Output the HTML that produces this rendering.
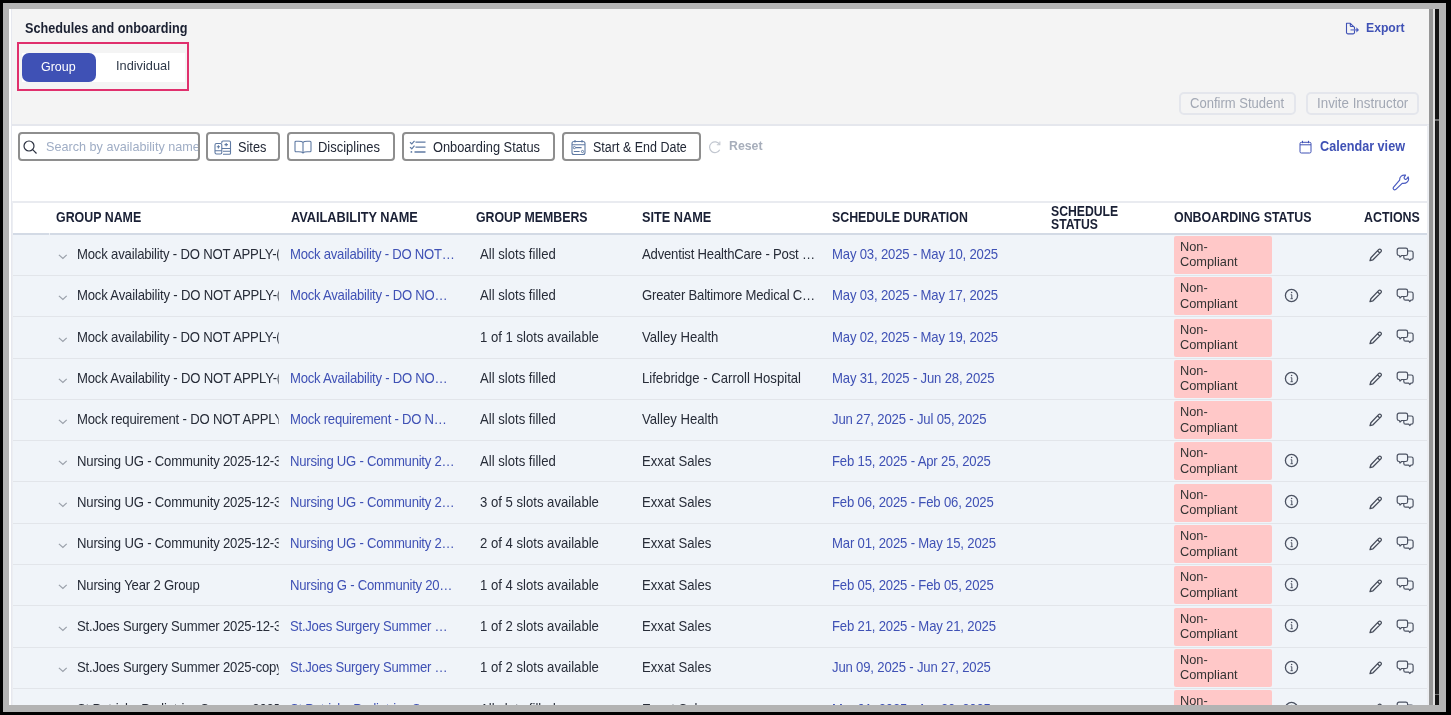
<!DOCTYPE html>
<html><head><meta charset="utf-8"><style>
*{box-sizing:border-box}
html,body{margin:0;padding:0}
body{width:1451px;height:715px;background:#000;position:relative;overflow:hidden;font-family:"Liberation Sans",sans-serif;color:#2b3140}
.gray{position:absolute;left:3px;top:3px;width:1443px;height:709px;background:#b3b3b3}
.content{position:absolute;left:0;top:0;width:1429px;height:705px;overflow:hidden;clip-path:inset(9px 0 0 9px);will-change:transform}
.content>*{position:absolute}
.lwhite{left:9px;top:9px;width:2px;height:696px;background:#fff}
.llav{left:11px;top:9px;width:1px;height:696px;background:#e6e8ef}
.hdr{left:12px;top:9px;width:1417px;height:117px;background:#f4f4f4;border-bottom:2px solid #e5e7ed}
.white{left:12px;top:126px;width:1417px;height:579px;background:#fff}
.title{left:25px;top:18.5px;font-size:13.8px;font-weight:bold;color:#1b2132;line-height:20px;transform:scaleX(0.917);transform-origin:0 50%;white-space:nowrap}
.export{left:1345px;top:17px;height:20px;width:70px}
.export svg{position:absolute;left:-1px;top:4px}
.export span{position:absolute;left:21px;top:1px;font-size:13.5px;font-weight:bold;color:#3f51b5;line-height:20px;transform:scaleX(0.903);transform-origin:0 50%}
.pinkbox{left:17px;top:42px;width:172px;height:49px;border:2px solid #e0306d}
.toggle{left:22px;top:53px;width:163px;height:29px;background:#fff}
.toggle .grp{position:absolute;left:0;top:0;width:74px;height:29px;background:#3f51b5;border-radius:7px}
.toggle .grpt{position:absolute;left:19.4px;top:-1.5px;color:#fff;font-size:13.6px;line-height:29px;transform:scaleX(0.918);transform-origin:0 50%}
.toggle .ind{position:absolute;left:93.5px;top:-2px;line-height:29px;font-size:13.6px;color:#2e3848;transform:scaleX(0.94);transform-origin:0 50%}
.dbtn{top:92px;height:23px;border:2px solid #e4e6ec;border-radius:5px}
.dbtn span{position:absolute;left:9px;top:0px;line-height:20px;font-size:13.8px;color:#a2a8b4;white-space:nowrap;transform:scaleX(0.945);transform-origin:0 50%}
.search{left:18px;top:132px;width:182px;height:29px;border:2px solid #8e8e8e;border-radius:4px;background:#fff;overflow:hidden}
.search svg{position:absolute;left:3px;top:5.5px}
.search span{position:absolute;left:26px;top:0;line-height:25.5px;font-size:13.6px;color:#9fadc5;white-space:nowrap;transform:scaleX(0.93);transform-origin:0 50%}
.fbtn{top:132px;height:29px;border:2px solid #8e8e8e;border-radius:4px;background:#fff}
.fbtn .fi{position:absolute}
.fbtn span{position:absolute;top:0px;line-height:26.5px;font-size:14px;color:#222836;white-space:nowrap;transform-origin:0 50%}
.reseti{left:708px;top:140px}
.reset{left:728.5px;top:136px;line-height:20px;font-size:13.6px;color:#a7aebb;font-weight:bold;transform:scaleX(0.905);transform-origin:0 50%}
.calview{left:1299px;top:136px;width:120px;height:20px}
.calview svg{position:absolute;left:0;top:4px}
.calview span{position:absolute;left:21px;top:0.8px;line-height:20px;font-size:13.8px;font-weight:bold;color:#3f51b5;white-space:nowrap;transform:scaleX(0.916);transform-origin:0 50%}
.wrench{left:1388px;top:170px}
.ttop{left:12px;top:201px;width:1417px;height:2px;background:#e9ebf0}
.thead{left:13px;top:203px;width:1416px;height:30px;background:#fff}
.th{position:absolute;top:-0.7px;line-height:30px;font-size:14.2px;font-weight:bold;color:#1a2035;white-space:nowrap;margin-left:-13px;transform-origin:0 50%}
.th.two{line-height:13px;top:2px}
.tbot{left:13px;top:233px;width:1416px;height:2px;background:#d3dae5;z-index:3}
.row{left:13px;width:1416px;height:41.31px;background:#f0f4f9;box-sizing:border-box;border-bottom:1px solid #e2e5ea}
.row>*{position:absolute}
.row .c{top:-0.5px;line-height:40px;font-size:14.2px;color:#272c38;white-space:nowrap;overflow:hidden;transform:scaleX(0.925);transform-origin:0 50%}
.chevw{left:44.5px;top:19.3px;width:10px;height:6px}
.chevw svg{display:block}
.gname{left:63.5px;width:218px;letter-spacing:-0.2px}
.aname{left:277px;width:190px;color:#3f51b5 !important;letter-spacing:-0.27px}
.members{left:467px;width:150px}
.site{left:628.5px;width:200px}
.dur{left:818.5px;width:220px;color:#3f51b5 !important;letter-spacing:-0.19px}
.badge{left:1161px;top:1.3px;width:98px;height:38px;background:#ffc8c8;border-radius:2px}
.badge span{position:absolute;left:5.5px;font-size:13.2px;color:#333;line-height:16px;white-space:nowrap;transform:scaleX(0.97);transform-origin:0 50%}
.badge span:first-child{top:3px}
.badge span:last-child{top:18.5px}
.info{left:1271px;top:12px}
.pencil{left:1355px;top:12.5px}
.chat{left:1383px;top:11.2px}
.rs1{position:absolute;left:1429px;top:9px;width:4px;height:696px;background:#969696}
.rs2{position:absolute;left:1433px;top:9px;width:2px;height:696px;background:#dedede}
.rs3{position:absolute;left:1435px;top:9px;width:4px;height:696px;background:#141414}

.thumb{position:absolute;left:1436px;top:121px;width:3px;height:573px;background:#1f1f1f}
.tick{position:absolute;left:1435px;width:4px;height:1.5px;background:#6e6e6e}
.notch{left:49px;top:233px;width:1px;height:2px;background:#eef1f5;z-index:4}
.redge{left:1427px;top:125px;width:2px;height:580px;background:#eceef2;z-index:5}
.ledge{left:12px;top:201px;width:1px;height:504px;background:#eceef2;z-index:5}
.row .ell{letter-spacing:-0.22px}

</style></head><body>
<div class="gray"></div>
<div class="content">
  <div class="lwhite"></div><div class="llav"></div>
  <div class="hdr"></div>
  <div class="title">Schedules and onboarding</div>
  <div class="export"><svg width="17" height="15" viewBox="0 0 17 15"><path d="M2.5 2.3H6.3L10.5 6.3V11.4A1.5 1.5 0 0 1 9 12.9H4A1.5 1.5 0 0 1 2.5 11.4Z M6.3 2.5V4.7A0.8 0.8 0 0 0 7.1 5.5H10.3" fill="none" stroke="#3f51b5" stroke-width="1.1" stroke-linejoin="round"/><path d="M6.5 8.9H13" stroke="#6f7dcc" stroke-width="1.3"/><path d="M12.4 6.2L15 8.9L12.4 11.6Z" fill="#4a5bc0"/></svg><span>Export</span></div>
  <div class="pinkbox"></div>
  <div class="toggle"><div class="grp"></div><div class="grpt">Group</div><div class="ind">Individual</div></div>
  <div class="dbtn" style="left:1179px;width:117px"><span>Confirm Student</span></div>
  <div class="dbtn" style="left:1306px;width:113px"><span style="transform:scaleX(0.968)">Invite Instructor</span></div>
  <div class="white"></div>
  <div class="search"><svg width="15" height="15" viewBox="0 0 15 15"><circle cx="6" cy="6" r="5" fill="none" stroke="#2b3140" stroke-width="1.2"/><path d="M9.7 9.7l3.8 3.8" stroke="#2b3140" stroke-width="1.2"/></svg><span>Search by availability name</span></div>
  
  <div class="fbtn" style="left:206px;width:74px">
    <svg class="fi" style="left:6px;top:6px" width="18" height="15" viewBox="0 0 18 15"><rect x="1" y="3.5" width="6.8" height="10.5" rx="1.5" fill="none" stroke="#5f7aa3" stroke-width="1.1"/><path d="M1 10.8h6.8M2.8 6.8h3.2M4.4 5.2v3.2" stroke="#5f7aa3" stroke-width="1.1" fill="none"/><path d="M7.8 3.2V2.2a1.2 1.2 0 0 1 1.2-1.2h6.3a1.2 1.2 0 0 1 1.2 1.2v11a1 1 0 0 1-1 1H9M7.8 8.5h8.7M9 11.3h7.5M10.5 4.6h3.4M12.2 2.9v3.4" stroke="#5f7aa3" stroke-width="1.1" fill="none"/></svg>
    <span style="left:29.5px;transform:scaleX(0.912)">Sites</span></div>
  <div class="fbtn" style="left:286.5px;width:108.5px">
    <svg class="fi" style="left:5.5px;top:6px" width="18" height="14" viewBox="0 0 18 14"><path d="M1 2.2a1 1 0 0 1 1-1h2.7c1.7 0 3.6 0.3 4.3 1.1 0.7-0.8 2.6-1.1 4.3-1.1H16a1 1 0 0 1 1 1v8.6a1 1 0 0 1-1 1h-2.7c-1.7 0-3.6 0.3-4.3 1.2-0.7-0.9-2.6-1.2-4.3-1.2H2a1 1 0 0 1-1-1z M9 2.3v10.2" fill="none" stroke="#5f7aa3" stroke-width="1.1"/></svg>
    <span style="left:29px;transform:scaleX(0.926)">Disciplines</span></div>
  <div class="fbtn" style="left:402px;width:153px">
    <svg class="fi" style="left:4.5px;top:6px" width="19" height="15" viewBox="0 0 19 15"><path d="M1 2.2l1.8 1.7L5.5 0.8M1 7.1l1.8 1.7L5.5 5.7" fill="none" stroke="#5f7aa3" stroke-width="1.2"/><circle cx="2.4" cy="11.9" r="0.9" fill="#5f7aa3"/><path d="M6.5 2.1h10M6.5 7.2h10M5.5 12h11" stroke="#5f7aa3" stroke-width="1.3"/></svg>
    <span style="left:28.5px;transform:scaleX(0.916)">Onboarding Status</span></div>
  <div class="fbtn" style="left:562px;width:139px">
    <svg class="fi" style="left:7px;top:5px" width="16" height="17" viewBox="0 0 16 17"><rect x="1" y="2.5" width="13" height="13" rx="2" fill="none" stroke="#5f7aa3" stroke-width="1.1"/><path d="M1 5.8h13M4 1v2.5M11 1v2.5M4.8 8.6h5.8M2.8 12.5h5.8" stroke="#5f7aa3" stroke-width="1.1" fill="none"/><circle cx="3.4" cy="8.6" r="1.1" fill="none" stroke="#5f7aa3" stroke-width="1"/><circle cx="11.5" cy="12.5" r="1.1" fill="none" stroke="#5f7aa3" stroke-width="1"/></svg>
    <span style="left:29px;transform:scaleX(0.893)">Start &amp; End Date</span></div>
  <svg class="reseti" width="14" height="14" viewBox="0 0 13 13"><path d="M10.8 4.2A5 5 0 1 0 10.9 9" fill="none" stroke="#c2c7d0" stroke-width="1.1"/><path d="M11 1.5v2.9H8.2" fill="none" stroke="#c2c7d0" stroke-width="1"/></svg>
  <div class="reset">Reset</div>
  <div class="calview"><svg width="13" height="14" viewBox="0 0 13 14"><rect x="1" y="2.3" width="11" height="10.7" rx="1.3" fill="none" stroke="#3f51b5" stroke-width="1"/><path d="M1 4.8h11M3.5 0.8v2.4M9.5 0.8v2.4" stroke="#3f51b5" stroke-width="1"/></svg><span>Calendar view</span></div>
  <svg class="wrench" width="26" height="25" viewBox="0 0 26 25"><path d="M11.6 10.2C11.4 6.8 14.2 4.4 17.5 5.2L16.1 7.4C16 9.2 17.6 10 18.9 8.6L20.2 7C21.6 10.8 18.6 13.9 14.2 13.4L7.6 19.6A1.6 1.6 0 0 1 5.4 17.4Z" fill="none" stroke="#4a5bc0" stroke-width="1.2" stroke-linejoin="round"/></svg>

  
  <div class="ttop"></div>
  <div class="thead">
    <div class="th" style="left:56px;transform:scaleX(0.874)">GROUP NAME</div>
    <div class="th" style="left:290.5px;transform:scaleX(0.899)">AVAILABILITY NAME</div>
    <div class="th" style="left:475.5px;transform:scaleX(0.87)">GROUP MEMBERS</div>
    <div class="th" style="left:641.5px;transform:scaleX(0.896)">SITE NAME</div>
    <div class="th" style="left:831.5px;transform:scaleX(0.872)">SCHEDULE DURATION</div>
    <div class="th two" style="left:1051px;transform:scaleX(0.86)">SCHEDULE<br>STATUS</div>
    <div class="th" style="left:1174px;transform:scaleX(0.875)">ONBOARDING STATUS</div>
    <div class="th" style="left:1364px;transform:scaleX(0.874)">ACTIONS</div>
  </div>
  <div class="tbot"></div>
  <div class="notch"></div>
  <div class="ledge"></div>
  <div class="redge"></div>
<div class="row" style="top:234.60px">
<div class="chevw"><svg class="ic chev" width="10" height="6" viewBox="0 0 10 6"><path d="M0.9 0.9l4 3.6 3.8-3.6" fill="none" stroke="#9aa0aa" stroke-width="1.2"/></svg></div>
<div class="c gname">Mock availability - DO NOT APPLY-(copy)</div>
<div class="c aname">Mock availability - DO NOT…</div>
<div class="c members">All slots filled</div>
<div class="c site ell">Adventist HealthCare - Post …</div>
<div class="c dur">May 03, 2025 - May 10, 2025</div>
<div class="badge"><span>Non-</span><span>Compliant</span></div>

<svg class="ic pencil" width="16" height="16" viewBox="0 0 16 16"><path d="M10.6 2.6a1.6 1.6 0 0 1 2.3 2.3L5 12.8l-3 0.9 0.9-3z M9.5 3.7l2.3 2.3" fill="none" stroke="#474d5b" stroke-width="1.3" stroke-linejoin="round"/></svg>
<svg class="ic chat" width="18" height="16" viewBox="0 0 18 16"><path d="M3 2.2h6.8a1.8 1.8 0 0 1 1.8 1.8v3.7a1.8 1.8 0 0 1-1.8 1.8H5.6l-1.6 1.5-0.7-1.5H3a1.8 1.8 0 0 1-1.8-1.8V4A1.8 1.8 0 0 1 3 2.2z" fill="none" stroke="#4b5262" stroke-width="1.2" stroke-linejoin="round"/><path d="M11.6 5h3.7a1.8 1.8 0 0 1 1.8 1.8v4.6a1.8 1.8 0 0 1-1.8 1.8h-0.4l-1 1.3-1.2-1.3H9.6a1.8 1.8 0 0 1-1.8-1.8V9.5" fill="none" stroke="#4b5262" stroke-width="1.2" stroke-linejoin="round"/></svg>
</div>
<div class="row" style="top:275.91px">
<div class="chevw"><svg class="ic chev" width="10" height="6" viewBox="0 0 10 6"><path d="M0.9 0.9l4 3.6 3.8-3.6" fill="none" stroke="#9aa0aa" stroke-width="1.2"/></svg></div>
<div class="c gname">Mock Availability - DO NOT APPLY-(copy)</div>
<div class="c aname">Mock Availability - DO NO…</div>
<div class="c members">All slots filled</div>
<div class="c site ell">Greater Baltimore Medical C…</div>
<div class="c dur">May 03, 2025 - May 17, 2025</div>
<div class="badge"><span>Non-</span><span>Compliant</span></div>
<svg class="ic info" width="15" height="15" viewBox="0 0 15 15"><circle cx="7.5" cy="7.5" r="6.1" fill="none" stroke="#4b5262" stroke-width="1.3"/><circle cx="7.6" cy="4.6" r="0.75" fill="#4b5262"/><path d="M6.7 6.7h1.1v3.9M6.5 10.7h2.3" fill="none" stroke="#4b5262" stroke-width="1"/></svg>
<svg class="ic pencil" width="16" height="16" viewBox="0 0 16 16"><path d="M10.6 2.6a1.6 1.6 0 0 1 2.3 2.3L5 12.8l-3 0.9 0.9-3z M9.5 3.7l2.3 2.3" fill="none" stroke="#474d5b" stroke-width="1.3" stroke-linejoin="round"/></svg>
<svg class="ic chat" width="18" height="16" viewBox="0 0 18 16"><path d="M3 2.2h6.8a1.8 1.8 0 0 1 1.8 1.8v3.7a1.8 1.8 0 0 1-1.8 1.8H5.6l-1.6 1.5-0.7-1.5H3a1.8 1.8 0 0 1-1.8-1.8V4A1.8 1.8 0 0 1 3 2.2z" fill="none" stroke="#4b5262" stroke-width="1.2" stroke-linejoin="round"/><path d="M11.6 5h3.7a1.8 1.8 0 0 1 1.8 1.8v4.6a1.8 1.8 0 0 1-1.8 1.8h-0.4l-1 1.3-1.2-1.3H9.6a1.8 1.8 0 0 1-1.8-1.8V9.5" fill="none" stroke="#4b5262" stroke-width="1.2" stroke-linejoin="round"/></svg>
</div>
<div class="row" style="top:317.22px">
<div class="chevw"><svg class="ic chev" width="10" height="6" viewBox="0 0 10 6"><path d="M0.9 0.9l4 3.6 3.8-3.6" fill="none" stroke="#9aa0aa" stroke-width="1.2"/></svg></div>
<div class="c gname">Mock availability - DO NOT APPLY-(copy)</div>
<div class="c aname"></div>
<div class="c members">1 of 1 slots available</div>
<div class="c site">Valley Health</div>
<div class="c dur">May 02, 2025 - May 19, 2025</div>
<div class="badge"><span>Non-</span><span>Compliant</span></div>

<svg class="ic pencil" width="16" height="16" viewBox="0 0 16 16"><path d="M10.6 2.6a1.6 1.6 0 0 1 2.3 2.3L5 12.8l-3 0.9 0.9-3z M9.5 3.7l2.3 2.3" fill="none" stroke="#474d5b" stroke-width="1.3" stroke-linejoin="round"/></svg>
<svg class="ic chat" width="18" height="16" viewBox="0 0 18 16"><path d="M3 2.2h6.8a1.8 1.8 0 0 1 1.8 1.8v3.7a1.8 1.8 0 0 1-1.8 1.8H5.6l-1.6 1.5-0.7-1.5H3a1.8 1.8 0 0 1-1.8-1.8V4A1.8 1.8 0 0 1 3 2.2z" fill="none" stroke="#4b5262" stroke-width="1.2" stroke-linejoin="round"/><path d="M11.6 5h3.7a1.8 1.8 0 0 1 1.8 1.8v4.6a1.8 1.8 0 0 1-1.8 1.8h-0.4l-1 1.3-1.2-1.3H9.6a1.8 1.8 0 0 1-1.8-1.8V9.5" fill="none" stroke="#4b5262" stroke-width="1.2" stroke-linejoin="round"/></svg>
</div>
<div class="row" style="top:358.53px">
<div class="chevw"><svg class="ic chev" width="10" height="6" viewBox="0 0 10 6"><path d="M0.9 0.9l4 3.6 3.8-3.6" fill="none" stroke="#9aa0aa" stroke-width="1.2"/></svg></div>
<div class="c gname">Mock Availability - DO NOT APPLY-(copy)</div>
<div class="c aname">Mock Availability - DO NO…</div>
<div class="c members">All slots filled</div>
<div class="c site">Lifebridge - Carroll Hospital</div>
<div class="c dur">May 31, 2025 - Jun 28, 2025</div>
<div class="badge"><span>Non-</span><span>Compliant</span></div>
<svg class="ic info" width="15" height="15" viewBox="0 0 15 15"><circle cx="7.5" cy="7.5" r="6.1" fill="none" stroke="#4b5262" stroke-width="1.3"/><circle cx="7.6" cy="4.6" r="0.75" fill="#4b5262"/><path d="M6.7 6.7h1.1v3.9M6.5 10.7h2.3" fill="none" stroke="#4b5262" stroke-width="1"/></svg>
<svg class="ic pencil" width="16" height="16" viewBox="0 0 16 16"><path d="M10.6 2.6a1.6 1.6 0 0 1 2.3 2.3L5 12.8l-3 0.9 0.9-3z M9.5 3.7l2.3 2.3" fill="none" stroke="#474d5b" stroke-width="1.3" stroke-linejoin="round"/></svg>
<svg class="ic chat" width="18" height="16" viewBox="0 0 18 16"><path d="M3 2.2h6.8a1.8 1.8 0 0 1 1.8 1.8v3.7a1.8 1.8 0 0 1-1.8 1.8H5.6l-1.6 1.5-0.7-1.5H3a1.8 1.8 0 0 1-1.8-1.8V4A1.8 1.8 0 0 1 3 2.2z" fill="none" stroke="#4b5262" stroke-width="1.2" stroke-linejoin="round"/><path d="M11.6 5h3.7a1.8 1.8 0 0 1 1.8 1.8v4.6a1.8 1.8 0 0 1-1.8 1.8h-0.4l-1 1.3-1.2-1.3H9.6a1.8 1.8 0 0 1-1.8-1.8V9.5" fill="none" stroke="#4b5262" stroke-width="1.2" stroke-linejoin="round"/></svg>
</div>
<div class="row" style="top:399.84px">
<div class="chevw"><svg class="ic chev" width="10" height="6" viewBox="0 0 10 6"><path d="M0.9 0.9l4 3.6 3.8-3.6" fill="none" stroke="#9aa0aa" stroke-width="1.2"/></svg></div>
<div class="c gname">Mock requirement - DO NOT APPLY-(copy)</div>
<div class="c aname">Mock requirement - DO N…</div>
<div class="c members">All slots filled</div>
<div class="c site">Valley Health</div>
<div class="c dur">Jun 27, 2025 - Jul 05, 2025</div>
<div class="badge"><span>Non-</span><span>Compliant</span></div>

<svg class="ic pencil" width="16" height="16" viewBox="0 0 16 16"><path d="M10.6 2.6a1.6 1.6 0 0 1 2.3 2.3L5 12.8l-3 0.9 0.9-3z M9.5 3.7l2.3 2.3" fill="none" stroke="#474d5b" stroke-width="1.3" stroke-linejoin="round"/></svg>
<svg class="ic chat" width="18" height="16" viewBox="0 0 18 16"><path d="M3 2.2h6.8a1.8 1.8 0 0 1 1.8 1.8v3.7a1.8 1.8 0 0 1-1.8 1.8H5.6l-1.6 1.5-0.7-1.5H3a1.8 1.8 0 0 1-1.8-1.8V4A1.8 1.8 0 0 1 3 2.2z" fill="none" stroke="#4b5262" stroke-width="1.2" stroke-linejoin="round"/><path d="M11.6 5h3.7a1.8 1.8 0 0 1 1.8 1.8v4.6a1.8 1.8 0 0 1-1.8 1.8h-0.4l-1 1.3-1.2-1.3H9.6a1.8 1.8 0 0 1-1.8-1.8V9.5" fill="none" stroke="#4b5262" stroke-width="1.2" stroke-linejoin="round"/></svg>
</div>
<div class="row" style="top:441.15px">
<div class="chevw"><svg class="ic chev" width="10" height="6" viewBox="0 0 10 6"><path d="M0.9 0.9l4 3.6 3.8-3.6" fill="none" stroke="#9aa0aa" stroke-width="1.2"/></svg></div>
<div class="c gname">Nursing UG - Community 2025-12-31</div>
<div class="c aname">Nursing UG - Community 2…</div>
<div class="c members">All slots filled</div>
<div class="c site">Exxat Sales</div>
<div class="c dur">Feb 15, 2025 - Apr 25, 2025</div>
<div class="badge"><span>Non-</span><span>Compliant</span></div>
<svg class="ic info" width="15" height="15" viewBox="0 0 15 15"><circle cx="7.5" cy="7.5" r="6.1" fill="none" stroke="#4b5262" stroke-width="1.3"/><circle cx="7.6" cy="4.6" r="0.75" fill="#4b5262"/><path d="M6.7 6.7h1.1v3.9M6.5 10.7h2.3" fill="none" stroke="#4b5262" stroke-width="1"/></svg>
<svg class="ic pencil" width="16" height="16" viewBox="0 0 16 16"><path d="M10.6 2.6a1.6 1.6 0 0 1 2.3 2.3L5 12.8l-3 0.9 0.9-3z M9.5 3.7l2.3 2.3" fill="none" stroke="#474d5b" stroke-width="1.3" stroke-linejoin="round"/></svg>
<svg class="ic chat" width="18" height="16" viewBox="0 0 18 16"><path d="M3 2.2h6.8a1.8 1.8 0 0 1 1.8 1.8v3.7a1.8 1.8 0 0 1-1.8 1.8H5.6l-1.6 1.5-0.7-1.5H3a1.8 1.8 0 0 1-1.8-1.8V4A1.8 1.8 0 0 1 3 2.2z" fill="none" stroke="#4b5262" stroke-width="1.2" stroke-linejoin="round"/><path d="M11.6 5h3.7a1.8 1.8 0 0 1 1.8 1.8v4.6a1.8 1.8 0 0 1-1.8 1.8h-0.4l-1 1.3-1.2-1.3H9.6a1.8 1.8 0 0 1-1.8-1.8V9.5" fill="none" stroke="#4b5262" stroke-width="1.2" stroke-linejoin="round"/></svg>
</div>
<div class="row" style="top:482.46px">
<div class="chevw"><svg class="ic chev" width="10" height="6" viewBox="0 0 10 6"><path d="M0.9 0.9l4 3.6 3.8-3.6" fill="none" stroke="#9aa0aa" stroke-width="1.2"/></svg></div>
<div class="c gname">Nursing UG - Community 2025-12-31</div>
<div class="c aname">Nursing UG - Community 2…</div>
<div class="c members">3 of 5 slots available</div>
<div class="c site">Exxat Sales</div>
<div class="c dur">Feb 06, 2025 - Feb 06, 2025</div>
<div class="badge"><span>Non-</span><span>Compliant</span></div>
<svg class="ic info" width="15" height="15" viewBox="0 0 15 15"><circle cx="7.5" cy="7.5" r="6.1" fill="none" stroke="#4b5262" stroke-width="1.3"/><circle cx="7.6" cy="4.6" r="0.75" fill="#4b5262"/><path d="M6.7 6.7h1.1v3.9M6.5 10.7h2.3" fill="none" stroke="#4b5262" stroke-width="1"/></svg>
<svg class="ic pencil" width="16" height="16" viewBox="0 0 16 16"><path d="M10.6 2.6a1.6 1.6 0 0 1 2.3 2.3L5 12.8l-3 0.9 0.9-3z M9.5 3.7l2.3 2.3" fill="none" stroke="#474d5b" stroke-width="1.3" stroke-linejoin="round"/></svg>
<svg class="ic chat" width="18" height="16" viewBox="0 0 18 16"><path d="M3 2.2h6.8a1.8 1.8 0 0 1 1.8 1.8v3.7a1.8 1.8 0 0 1-1.8 1.8H5.6l-1.6 1.5-0.7-1.5H3a1.8 1.8 0 0 1-1.8-1.8V4A1.8 1.8 0 0 1 3 2.2z" fill="none" stroke="#4b5262" stroke-width="1.2" stroke-linejoin="round"/><path d="M11.6 5h3.7a1.8 1.8 0 0 1 1.8 1.8v4.6a1.8 1.8 0 0 1-1.8 1.8h-0.4l-1 1.3-1.2-1.3H9.6a1.8 1.8 0 0 1-1.8-1.8V9.5" fill="none" stroke="#4b5262" stroke-width="1.2" stroke-linejoin="round"/></svg>
</div>
<div class="row" style="top:523.77px">
<div class="chevw"><svg class="ic chev" width="10" height="6" viewBox="0 0 10 6"><path d="M0.9 0.9l4 3.6 3.8-3.6" fill="none" stroke="#9aa0aa" stroke-width="1.2"/></svg></div>
<div class="c gname">Nursing UG - Community 2025-12-31</div>
<div class="c aname">Nursing UG - Community 2…</div>
<div class="c members">2 of 4 slots available</div>
<div class="c site">Exxat Sales</div>
<div class="c dur">Mar 01, 2025 - May 15, 2025</div>
<div class="badge"><span>Non-</span><span>Compliant</span></div>
<svg class="ic info" width="15" height="15" viewBox="0 0 15 15"><circle cx="7.5" cy="7.5" r="6.1" fill="none" stroke="#4b5262" stroke-width="1.3"/><circle cx="7.6" cy="4.6" r="0.75" fill="#4b5262"/><path d="M6.7 6.7h1.1v3.9M6.5 10.7h2.3" fill="none" stroke="#4b5262" stroke-width="1"/></svg>
<svg class="ic pencil" width="16" height="16" viewBox="0 0 16 16"><path d="M10.6 2.6a1.6 1.6 0 0 1 2.3 2.3L5 12.8l-3 0.9 0.9-3z M9.5 3.7l2.3 2.3" fill="none" stroke="#474d5b" stroke-width="1.3" stroke-linejoin="round"/></svg>
<svg class="ic chat" width="18" height="16" viewBox="0 0 18 16"><path d="M3 2.2h6.8a1.8 1.8 0 0 1 1.8 1.8v3.7a1.8 1.8 0 0 1-1.8 1.8H5.6l-1.6 1.5-0.7-1.5H3a1.8 1.8 0 0 1-1.8-1.8V4A1.8 1.8 0 0 1 3 2.2z" fill="none" stroke="#4b5262" stroke-width="1.2" stroke-linejoin="round"/><path d="M11.6 5h3.7a1.8 1.8 0 0 1 1.8 1.8v4.6a1.8 1.8 0 0 1-1.8 1.8h-0.4l-1 1.3-1.2-1.3H9.6a1.8 1.8 0 0 1-1.8-1.8V9.5" fill="none" stroke="#4b5262" stroke-width="1.2" stroke-linejoin="round"/></svg>
</div>
<div class="row" style="top:565.08px">
<div class="chevw"><svg class="ic chev" width="10" height="6" viewBox="0 0 10 6"><path d="M0.9 0.9l4 3.6 3.8-3.6" fill="none" stroke="#9aa0aa" stroke-width="1.2"/></svg></div>
<div class="c gname">Nursing Year 2 Group</div>
<div class="c aname">Nursing G - Community 20…</div>
<div class="c members">1 of 4 slots available</div>
<div class="c site">Exxat Sales</div>
<div class="c dur">Feb 05, 2025 - Feb 05, 2025</div>
<div class="badge"><span>Non-</span><span>Compliant</span></div>
<svg class="ic info" width="15" height="15" viewBox="0 0 15 15"><circle cx="7.5" cy="7.5" r="6.1" fill="none" stroke="#4b5262" stroke-width="1.3"/><circle cx="7.6" cy="4.6" r="0.75" fill="#4b5262"/><path d="M6.7 6.7h1.1v3.9M6.5 10.7h2.3" fill="none" stroke="#4b5262" stroke-width="1"/></svg>
<svg class="ic pencil" width="16" height="16" viewBox="0 0 16 16"><path d="M10.6 2.6a1.6 1.6 0 0 1 2.3 2.3L5 12.8l-3 0.9 0.9-3z M9.5 3.7l2.3 2.3" fill="none" stroke="#474d5b" stroke-width="1.3" stroke-linejoin="round"/></svg>
<svg class="ic chat" width="18" height="16" viewBox="0 0 18 16"><path d="M3 2.2h6.8a1.8 1.8 0 0 1 1.8 1.8v3.7a1.8 1.8 0 0 1-1.8 1.8H5.6l-1.6 1.5-0.7-1.5H3a1.8 1.8 0 0 1-1.8-1.8V4A1.8 1.8 0 0 1 3 2.2z" fill="none" stroke="#4b5262" stroke-width="1.2" stroke-linejoin="round"/><path d="M11.6 5h3.7a1.8 1.8 0 0 1 1.8 1.8v4.6a1.8 1.8 0 0 1-1.8 1.8h-0.4l-1 1.3-1.2-1.3H9.6a1.8 1.8 0 0 1-1.8-1.8V9.5" fill="none" stroke="#4b5262" stroke-width="1.2" stroke-linejoin="round"/></svg>
</div>
<div class="row" style="top:606.39px">
<div class="chevw"><svg class="ic chev" width="10" height="6" viewBox="0 0 10 6"><path d="M0.9 0.9l4 3.6 3.8-3.6" fill="none" stroke="#9aa0aa" stroke-width="1.2"/></svg></div>
<div class="c gname">St.Joes Surgery Summer 2025-12-31</div>
<div class="c aname">St.Joes Surgery Summer …</div>
<div class="c members">1 of 2 slots available</div>
<div class="c site">Exxat Sales</div>
<div class="c dur">Feb 21, 2025 - May 21, 2025</div>
<div class="badge"><span>Non-</span><span>Compliant</span></div>
<svg class="ic info" width="15" height="15" viewBox="0 0 15 15"><circle cx="7.5" cy="7.5" r="6.1" fill="none" stroke="#4b5262" stroke-width="1.3"/><circle cx="7.6" cy="4.6" r="0.75" fill="#4b5262"/><path d="M6.7 6.7h1.1v3.9M6.5 10.7h2.3" fill="none" stroke="#4b5262" stroke-width="1"/></svg>
<svg class="ic pencil" width="16" height="16" viewBox="0 0 16 16"><path d="M10.6 2.6a1.6 1.6 0 0 1 2.3 2.3L5 12.8l-3 0.9 0.9-3z M9.5 3.7l2.3 2.3" fill="none" stroke="#474d5b" stroke-width="1.3" stroke-linejoin="round"/></svg>
<svg class="ic chat" width="18" height="16" viewBox="0 0 18 16"><path d="M3 2.2h6.8a1.8 1.8 0 0 1 1.8 1.8v3.7a1.8 1.8 0 0 1-1.8 1.8H5.6l-1.6 1.5-0.7-1.5H3a1.8 1.8 0 0 1-1.8-1.8V4A1.8 1.8 0 0 1 3 2.2z" fill="none" stroke="#4b5262" stroke-width="1.2" stroke-linejoin="round"/><path d="M11.6 5h3.7a1.8 1.8 0 0 1 1.8 1.8v4.6a1.8 1.8 0 0 1-1.8 1.8h-0.4l-1 1.3-1.2-1.3H9.6a1.8 1.8 0 0 1-1.8-1.8V9.5" fill="none" stroke="#4b5262" stroke-width="1.2" stroke-linejoin="round"/></svg>
</div>
<div class="row" style="top:647.70px">
<div class="chevw"><svg class="ic chev" width="10" height="6" viewBox="0 0 10 6"><path d="M0.9 0.9l4 3.6 3.8-3.6" fill="none" stroke="#9aa0aa" stroke-width="1.2"/></svg></div>
<div class="c gname">St.Joes Surgery Summer 2025-copy</div>
<div class="c aname">St.Joes Surgery Summer …</div>
<div class="c members">1 of 2 slots available</div>
<div class="c site">Exxat Sales</div>
<div class="c dur">Jun 09, 2025 - Jun 27, 2025</div>
<div class="badge"><span>Non-</span><span>Compliant</span></div>
<svg class="ic info" width="15" height="15" viewBox="0 0 15 15"><circle cx="7.5" cy="7.5" r="6.1" fill="none" stroke="#4b5262" stroke-width="1.3"/><circle cx="7.6" cy="4.6" r="0.75" fill="#4b5262"/><path d="M6.7 6.7h1.1v3.9M6.5 10.7h2.3" fill="none" stroke="#4b5262" stroke-width="1"/></svg>
<svg class="ic pencil" width="16" height="16" viewBox="0 0 16 16"><path d="M10.6 2.6a1.6 1.6 0 0 1 2.3 2.3L5 12.8l-3 0.9 0.9-3z M9.5 3.7l2.3 2.3" fill="none" stroke="#474d5b" stroke-width="1.3" stroke-linejoin="round"/></svg>
<svg class="ic chat" width="18" height="16" viewBox="0 0 18 16"><path d="M3 2.2h6.8a1.8 1.8 0 0 1 1.8 1.8v3.7a1.8 1.8 0 0 1-1.8 1.8H5.6l-1.6 1.5-0.7-1.5H3a1.8 1.8 0 0 1-1.8-1.8V4A1.8 1.8 0 0 1 3 2.2z" fill="none" stroke="#4b5262" stroke-width="1.2" stroke-linejoin="round"/><path d="M11.6 5h3.7a1.8 1.8 0 0 1 1.8 1.8v4.6a1.8 1.8 0 0 1-1.8 1.8h-0.4l-1 1.3-1.2-1.3H9.6a1.8 1.8 0 0 1-1.8-1.8V9.5" fill="none" stroke="#4b5262" stroke-width="1.2" stroke-linejoin="round"/></svg>
</div>
<div class="row" style="top:689.01px">
<div class="chevw"><svg class="ic chev" width="10" height="6" viewBox="0 0 10 6"><path d="M0.9 0.9l4 3.6 3.8-3.6" fill="none" stroke="#9aa0aa" stroke-width="1.2"/></svg></div>
<div class="c gname">St.Patricks Pediatrics Summer 2025</div>
<div class="c aname">St.Patricks Pediatrics S…</div>
<div class="c members">All slots filled</div>
<div class="c site">Exxat Sales</div>
<div class="c dur">Mar 01, 2025 - Apr 30, 2025</div>
<div class="badge"><span>Non-</span><span>Compliant</span></div>
<svg class="ic info" width="15" height="15" viewBox="0 0 15 15"><circle cx="7.5" cy="7.5" r="6.1" fill="none" stroke="#4b5262" stroke-width="1.3"/><circle cx="7.6" cy="4.6" r="0.75" fill="#4b5262"/><path d="M6.7 6.7h1.1v3.9M6.5 10.7h2.3" fill="none" stroke="#4b5262" stroke-width="1"/></svg>
<svg class="ic pencil" width="16" height="16" viewBox="0 0 16 16"><path d="M10.6 2.6a1.6 1.6 0 0 1 2.3 2.3L5 12.8l-3 0.9 0.9-3z M9.5 3.7l2.3 2.3" fill="none" stroke="#474d5b" stroke-width="1.3" stroke-linejoin="round"/></svg>
<svg class="ic chat" width="18" height="16" viewBox="0 0 18 16"><path d="M3 2.2h6.8a1.8 1.8 0 0 1 1.8 1.8v3.7a1.8 1.8 0 0 1-1.8 1.8H5.6l-1.6 1.5-0.7-1.5H3a1.8 1.8 0 0 1-1.8-1.8V4A1.8 1.8 0 0 1 3 2.2z" fill="none" stroke="#4b5262" stroke-width="1.2" stroke-linejoin="round"/><path d="M11.6 5h3.7a1.8 1.8 0 0 1 1.8 1.8v4.6a1.8 1.8 0 0 1-1.8 1.8h-0.4l-1 1.3-1.2-1.3H9.6a1.8 1.8 0 0 1-1.8-1.8V9.5" fill="none" stroke="#4b5262" stroke-width="1.2" stroke-linejoin="round"/></svg>
</div>
</div>
<div class="rs1"></div><div class="rs2"></div><div class="rs3"></div><div class="thumb"></div><div class="tick" style="top:119px"></div><div class="tick" style="top:693.5px"></div>
</body></html>
